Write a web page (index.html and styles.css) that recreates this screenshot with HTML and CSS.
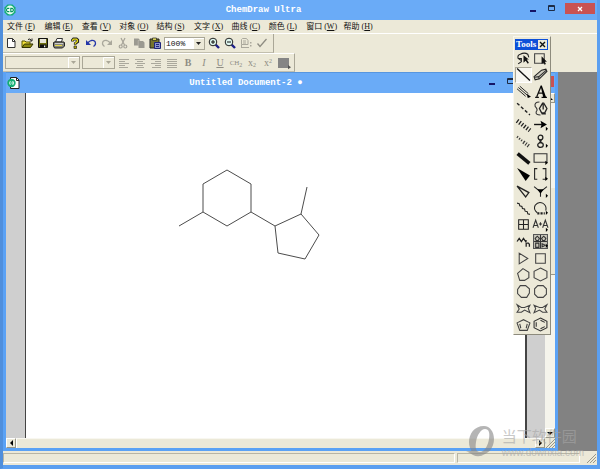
FILE: index.html
```html
<!DOCTYPE html>
<html lang="zh-CN">
<head>
<meta charset="utf-8">
<title>ChemDraw Ultra</title>
<link rel="stylesheet" href="styles.css">
</head>
<body>
<div class="app">
  <header class="titlebar">
    <svg class="app-icon" width="12" height="12" viewBox="0 0 12 12"><path d="M3.5.5h5l3 3v5l-3 3h-5l-3-3v-5z" fill="#12ad72"/><circle cx="6" cy="6" r="4.4" fill="#e9fff5"/><path d="M5.3 4.4H3.5L2.6 5.2v1.6l.9.8h1.8M6.8 4.4h1.5l1 .9v1.5l-1 .8H6.8z" fill="none" stroke="#079560" stroke-width="1.1"/></svg>
    <h1>ChemDraw Ultra</h1>
    <div class="winbtns">
      <button aria-label="最小化"><svg width="8" height="10"><path d="M1 7h6" stroke="#151567" stroke-width="2"/></svg></button>
      <button aria-label="最大化"><svg width="8" height="10"><path d="M1.500 1.500h6v5h-6zM1.500 2.500h6" fill="none" stroke="#1d2b45"/></svg></button>
      <button class="close" aria-label="关闭"><svg width="8" height="8"><path d="M2 2l4 4M6 2L2 6" stroke="#fff" stroke-width="1.300"/></svg></button>
    </div>
  </header>
  <nav class="menu">
    <a href="#">文件 <span>(<u>F</u>)</span></a><a href="#">编辑 <span>(<u>E</u>)</span></a><a href="#">查看 <span>(<u>V</u>)</span></a><a href="#">对象 <span>(<u>O</u>)</span></a><a href="#">结构 <span>(<u>S</u>)</span></a><a href="#">文字 <span>(<u>X</u>)</span></a><a href="#">曲线 <span>(<u>C</u>)</span></a><a href="#">颜色 <span>(<u>L</u>)</span></a><a href="#">窗口 <span>(<u>W</u>)</span></a><a href="#">帮助 <span>(<u>H</u>)</span></a>
  </nav>
  <div class="bars">
    <div class="bar">
      <button aria-label="新建"><svg viewBox="0 0 12 12"><path d="M2.500 1.500h5l2.500 2.500v6.500H2.500z" fill="#fff" stroke="#333"/><path d="M7.500 1.500v3H10" fill="none" stroke="#333"/></svg></button>
      <button aria-label="打开"><svg viewBox="0 0 12 12"><path d="M1 10V4h3l1 1h4v2" fill="#f3e23c" stroke="#565400"/><path d="M1 10.500L3.500 7H12l-2.500 3.500z" fill="#8c8a10" stroke="#333300"/><path d="M7 2.500q2-1.500 3.500 1M11 1.500v2.500H8.800" fill="none" stroke="#222"/></svg></button>
      <button aria-label="保存"><svg viewBox="0 0 12 12"><path d="M1.500 1.500h9v9h-9z" fill="#6e6e10" stroke="#111"/><path d="M3 2h6v4H3z" fill="#e7e5d8"/><path d="M3 7.500h6.500V11H3z" fill="#111"/><path d="M7 8.500h1.300v1.700H7z" fill="#eee"/></svg></button>
      <button aria-label="打印"><svg viewBox="0 0 12 12"><path d="M4 1.500h5.500L8.500 5h-6z" fill="#fff" stroke="#333"/><path d="M1 5h10l.5 1v3l-2 2H1.500L.500 9V6z" fill="#86867b" stroke="#222"/><path d="M2 8.500h7" stroke="#e7da4a"/><path d="M2 6.500h8" stroke="#ccc"/></svg></button>
      <button aria-label="帮助"><svg viewBox="0 0 12 12"><path d="M3.500 4.500V3l1-1h3l1.200 1v1.700L6.300 6.500v1.300" fill="none" stroke="#222" stroke-width="2.800"/><path d="M3.600 4V3l1-.8h2.800l1 .8v1.500L6.300 6.300v1" fill="none" stroke="#e6dc13" stroke-width="1.300"/><path d="M5 9h2.500v2.500H5z" fill="#b7ac00" stroke="#222" stroke-width=".7"/></svg></button>
      <button aria-label="撤消"><svg viewBox="0 0 12 12"><path d="M2.500 6Q7 1.500 10 4.500q1.500 3-1.500 5" fill="none" stroke="#2436a8" stroke-width="1.300"/><path d="M1 3v5h5z" fill="#2436a8"/></svg></button>
      <button aria-label="重做"><svg viewBox="0 0 12 12"><path d="M9.500 6Q5 1.500 2 4.500q-1.500 3 1.500 5" fill="none" stroke="#aaa89c" stroke-width="1.300"/><path d="M11 3v5H6z" fill="#aaa89c"/></svg></button>
      <button aria-label="剪切"><svg viewBox="0 0 12 12"><path d="M4 1l3.500 7M8 1L4.500 8" stroke="#a5a398" stroke-width="1.200"/><g fill="none" stroke="#a5a398" stroke-width="1.200"><circle cx="3.700" cy="9.500" r="1.500"/><circle cx="8.300" cy="9.500" r="1.500"/></g></svg></button>
      <button aria-label="复制"><svg viewBox="0 0 12 12"><path d="M1 1.500h4.500L7 3v5.500H1zM5.500 4H10l1.500 1.500V11h-6z" fill="#9b9a91"/><path d="M5.200 8.500v-5h2" fill="none" stroke="#c8c5b8" stroke-width=".6"/></svg></button>
      <button aria-label="粘贴"><svg viewBox="0 0 12 12"><path d="M1 2h9v9H1z" fill="#77742c" stroke="#222"/><path d="M3.500 1h4v2.500h-4z" fill="#d9d35b" stroke="#222" stroke-width=".7"/><path d="M5.500 5.500h6v6h-6z" fill="#8d93cc" stroke="#20267c"/><path d="M7 7.500h3M7 9.500h3" stroke="#20267c"/></svg></button>
      <select class="zoom" aria-label="缩放"><option>100%</option></select>
      <button aria-label="放大"><svg viewBox="0 0 12 12"><path d="M7.500 7.500L11 11" stroke="#1d2089" stroke-width="2.400"/><circle cx="5" cy="5" r="3.800" fill="#dff7f0" stroke="#222"/><path d="M3 5h4M5 3v4" stroke="#111"/></svg></button>
      <button aria-label="缩小"><svg viewBox="0 0 12 12"><path d="M7.500 7.500L11 11" stroke="#1d2089" stroke-width="2.400"/><circle cx="5" cy="5" r="3.800" fill="#dff7f0" stroke="#222"/><path d="M3 5h4" stroke="#111"/></svg></button>
      <button aria-label="检查结构"><svg viewBox="0 0 12 12"><g fill="none" stroke="#aaa89c"><path d="M2.500 1.500h4l1.500 2v4H1.500v-5zM3 4h3M3 6h3M1 10.500h8M1.500 7.500v3"/></g><path d="M10 5h1.500v1.500H10zM10 8h1.500v1.500H10z" fill="#aaa89c"/></svg></button>
      <button aria-label="确认"><svg viewBox="0 0 12 12"><path d="M1.500 6.500l2.500 3L10.500 2" fill="none" stroke="#8e8c82" stroke-width="1.300"/></svg></button>
    </div>
    <div class="bar format">
      <select class="font" aria-label="字体" disabled><option></option></select>
      <select class="size" aria-label="字号" disabled><option></option></select>
      <button aria-label="左对齐"><svg viewBox="0 0 12 12"><path d="M1 2.500h10M1 4.500h6M1 6.500h10M1 8.500h6M1 10.500h9" stroke="#aaa89c"/></svg></button>
      <button aria-label="居中"><svg viewBox="0 0 12 12"><path d="M1 2.500h10M3 4.500h6M1 6.500h10M3 8.500h6M2 10.500h8" stroke="#aaa89c"/></svg></button>
      <button aria-label="右对齐"><svg viewBox="0 0 12 12"><path d="M1 2.500h10M5 4.500h6M1 6.500h10M5 8.500h6M2 10.500h9" stroke="#aaa89c"/></svg></button>
      <button aria-label="两端对齐"><svg viewBox="0 0 12 12"><path d="M1 2.500h10M1 4.500h10M1 6.500h10M1 8.500h10M1 10.500h10" stroke="#aaa89c"/></svg></button>
      <button><b>B</b></button><button><i>I</i></button><button><u>U</u></button>
      <button class="chem">CH<sub>2</sub></button><button>x<sub>2</sub></button><button>x<sup>2</sup></button>
      <button aria-label="颜色"><svg viewBox="0 0 12 12"><path d="M0 1h11v10H0z" fill="#858585"/><path d="M10 8l3 2.200-3 2z" fill="#555"/></svg></button>
    </div>
  </div>

  <main class="mdi">
    <section class="doc">
      <header class="titlebar doc-title">
        <svg class="app-icon" width="13" height="12" viewBox="0 0 13 12"><path d="M3.500.500h6l2.500 2.500v8.500H3.500z" fill="#fff" stroke="#222"/><path d="M9.500.500v3H12" fill="none" stroke="#222"/><circle cx="4.500" cy="6" r="4.200" fill="#12ad72"/><path d="M4 4.800H2.700v2.400H4M5 4.800h1.500v2.400H5z" fill="none" stroke="#e9fff5" stroke-width=".8"/></svg>
        <h2>Untitled Document-2 ●</h2>
        <div class="winbtns">
          <button aria-label="最小化"><svg width="8" height="10"><path d="M1 7h6" stroke="#151567" stroke-width="2"/></svg></button>
          <button aria-label="最大化"><svg width="8" height="10"><path d="M1.500 1.500h6v5h-6zM1.500 2.500h6" fill="none" stroke="#1d2b45"/></svg></button>
          <button class="close" aria-label="关闭"><svg width="8" height="8"><path d="M2 2l4 4M6 2L2 6" stroke="#fff" stroke-width="1.300"/></svg></button>
        </div>
      </header>
      <div class="view">
        <div class="desk">
          <div class="paper">
            <svg class="molecule" width="150" height="100" viewBox="175 165 150 100" fill="none" stroke="#4c4c4c" stroke-width="1"><path d="M227 170l24 14v28l-24 14-24-14v-28zM203 212l-24 14M251 212l24 14 26-12 18 21-14 24-27-6-3-27M301 214l6-27"/></svg>
          </div>
        </div>
        <div class="scroll-v"><button aria-label="向上"><svg width="7" height="5"><path d="M0 4l3-3 3 3z"/></svg></button><i class="track"></i><i class="thumb"></i><i class="track low"></i><button aria-label="向下"><svg width="7" height="5"><path d="M0 1h6L3 4z"/></svg></button></div>
        <div class="scroll-h"><button aria-label="向左"><svg width="5" height="7"><path d="M4 0v6L1 3z"/></svg></button><i></i><button aria-label="向右"><svg width="5" height="7"><path d="M1 0v6l3-3z"/></svg></button></div>
        <svg class="grip" viewBox="0 0 10 10"><path d="M0 0h10v10H0z" fill="#ece9d8"/><path d="M1 10l9-9M4 10l6-6M7 10l3-3" stroke="#9a9889"/></svg>
      </div>
    </section>
  </main>
  <footer class="status"><span></span><span></span><svg class="grip" viewBox="0 0 10 10"><path d="M1 10l9-9M4 10l6-6M7 10l3-3" stroke="#9a9889"/></svg></footer>

  <aside class="tools">
    <header><h3>Tools</h3><button aria-label="关闭工具"><svg width="7" height="7"><path d="M1 1l5 5M6 1L1 6" stroke="#111" stroke-width="1.400"/></svg></button></header>
    <div class="grid">
      <button aria-label="套索"><svg viewBox="0 0 14 14"><path d="M5 9L2 7q-1-3 2-4 4-2 7 0l1 3M2 7l3 0 0 3-3 2" fill="none" stroke="#222"/><path d="M7 4v7l2-2 2 3 1-1-2-3h2z" fill="#111"/></svg></button>
      <button aria-label="选框"><svg viewBox="0 0 14 14"><path d="M1.500 2.500h9v9h-9z" fill="none" stroke="#444"/><path d="M8 5v7l2-1 1 2 1-1-1-2h2z" fill="#111"/></svg></button>
      <button class="on" aria-label="单键"><svg viewBox="0 0 14 14"><path d="M1 1.500l12 11" stroke="#111" stroke-width="1.300"/></svg></button>
      <button aria-label="橡皮"><svg viewBox="0 0 14 14"><path d="M1 9l7-6 4-1 1 2-7 7-4 1z" fill="#d0cec2" stroke="#222"/><path d="M1.500 9.500l4-.5 7-6M5.500 9v2.500" fill="none" stroke="#333"/></svg></button>
      <button aria-label="多重键"><svg viewBox="0 0 14 14"><path d="M1 4.500l8 7M3.500 2l8 7M2.200 3.200l8 7" stroke="#222" stroke-width=".9"/><path d="M10 9l4 3-3 1z"/></svg></button>
      <button aria-label="文本"><svg viewBox="0 0 14 14"><path d="M2 12.500h3.500M8 12.500h5M3.500 12L7.500 2M4.800 8.500h5" fill="none" stroke="#111" stroke-width="1.200"/><path d="M7 1.500h1.200L12.500 13H9.700z"/></svg></button>
      <button aria-label="虚线键"><svg viewBox="0 0 14 14"><path d="M1 2l12 11" stroke="#222" stroke-width="1.300" stroke-dasharray="3 2"/></svg></button>
      <button aria-label="钢笔"><svg viewBox="0 0 14 14"><path d="M6 1Q1 1 2 5q3 3 1 5-1 3 4 3" fill="none" stroke="#333"/><path d="M9 2L6 7l2 4h3l2-4-3-5zM9.500 3v5M8 12h4" fill="none" stroke="#222" stroke-width="1.200"/></svg></button>
      <button aria-label="切割键"><svg viewBox="0 0 14 14"><path d="M1 3.500l12 9" stroke="#222" stroke-width="4" stroke-dasharray="1.200 1.600"/></svg></button>
      <button aria-label="箭头"><svg viewBox="0 0 14 14"><path d="M1 7h8" stroke="#111" stroke-width="1.300"/><path d="M7 3.500L13 7l-6 3.500L8 7zM12 9l2 2-2 2z"/></svg></button>
      <button aria-label="切割楔键"><svg viewBox="0 0 14 14"><path d="M1 2.500l6 5" stroke="#333" stroke-width="2" stroke-dasharray="1 1.500"/><path d="M7 7.500l6 4.500" stroke="#333" stroke-width="3.500" stroke-dasharray="1 1.500"/></svg></button>
      <button aria-label="轨道"><svg viewBox="0 0 14 14"><g fill="none" stroke="#222" stroke-width="1.200"><circle cx="7" cy="3.300" r="2.200"/><ellipse cx="7" cy="10.300" rx="2.600" ry="2.200"/><path d="M6 5l2 3.500M8 5L6 8.500"/></g><path d="M12 9l2 2-2 2z"/></svg></button>
      <button aria-label="粗键"><svg viewBox="0 0 14 14"><path d="M1.500 2.500l11 9" stroke="#111" stroke-width="3.400"/></svg></button>
      <button aria-label="绘图元素"><svg viewBox="0 0 14 14"><path d="M1 2.500h12v8H1z" fill="none" stroke="#333"/><path d="M11.500 9l2.500 2-2.500 2z"/></svg></button>
      <button aria-label="楔键"><svg viewBox="0 0 14 14"><path d="M1 1l12 7-4 5z"/></svg></button>
      <button aria-label="括号"><svg viewBox="0 0 14 14"><path d="M4 1.500H1.500v10H4M9 1.500h3v10H9" fill="none" stroke="#222"/><path d="M11.500 9l2.500 2-2.500 2z"/></svg></button>
      <button aria-label="空心楔键"><svg viewBox="0 0 14 14"><path d="M1 2l11 6-3 4z" fill="none" stroke="#222" stroke-width="1.200"/></svg></button>
      <button aria-label="符号"><svg viewBox="0 0 14 14"><path d="M1 2.500l5 4h2l5-4M7 6v6" fill="none" stroke="#222"/><path d="M4 5h6L7 9zM12 9l2 2-2 2z"/></svg></button>
      <button aria-label="波浪键"><svg viewBox="0 0 14 14"><path d="M1 2l2 .5.500 2 2 .5.500 2 2 .5.500 2 2 .5.500 2 2 .5" fill="none" stroke="#222"/></svg></button>
      <button aria-label="弧"><svg viewBox="0 0 14 14"><path d="M4 11Q0 8 2 4q3-4 7-2 4 2 3 7" fill="none" stroke="#222"/><path d="M4 11.500h7" stroke="#222" stroke-width="2" stroke-dasharray="2 1"/><path d="M12 9l2 2-2 2z"/></svg></button>
      <button aria-label="表格"><svg viewBox="0 0 14 14"><path d="M2.500 2.500h9v9h-9zM7 2v10M2 7h10" fill="none" stroke="#222"/></svg></button>
      <button aria-label="查询"><svg viewBox="0 0 14 14"><path d="M0 10L2.500 3 5 10M1 8h3M5.500 6.500h3M7 5v3M9 10l2.500-7L14 10M10 8h3" fill="none" stroke="#333"/><path d="M12 10l2 2-2 2z"/></svg></button>
      <button aria-label="链"><svg viewBox="0 0 14 14"><path d="M1 7l2-3 2 3 2-3 2 3 1-1M9.500 12V8.500h2l1 1V12" fill="none" stroke="#222" stroke-width="1.200"/></svg></button>
      <button aria-label="模板"><svg viewBox="0 0 14 14"><path d="M.5.500h13v13H.500z" fill="#c9c7bb" stroke="#555"/><path d="M2 4l2-2 2 2-1 2H3zM8 4l2-2 2 2-1 2H9zM7 1v12M1 7h12M2.500 8.500h3v4h-3zM8.500 9l3 1.500-3 1.500z" fill="none" stroke="#333"/><path d="M12 9l2 2-2 2z"/></svg></button>
      <button aria-label="三元环"><svg viewBox="0 0 14 14"><path d="M3 2l8 5-8 5z" fill="none" stroke="#444"/></svg></button>
      <button aria-label="四元环"><svg viewBox="0 0 14 14"><path d="M2.500 2.500h9v9h-9z" fill="none" stroke="#444"/></svg></button>
      <button aria-label="五元环"><svg viewBox="0 0 14 14"><path d="M1.500 6l5-4.500L12 5v5l-4 2.500H3.500z" fill="none" stroke="#444"/></svg></button>
      <button aria-label="六元环"><svg viewBox="0 0 14 14"><path d="M7 1l6 3v6l-6 3-6-3V4z" fill="none" stroke="#444"/></svg></button>
      <button aria-label="七元环"><svg viewBox="0 0 14 14"><path d="M4 1.500h5l3.500 3v4L10 12.500H5L1.500 9V5z" fill="none" stroke="#444"/></svg></button>
      <button aria-label="八元环"><svg viewBox="0 0 14 14"><path d="M4.500 1.500h5l3 3v5l-3 3h-5l-3-3v-5z" fill="none" stroke="#444"/></svg></button>
      <button aria-label="椅式环一"><svg viewBox="0 0 14 14"><path d="M1 3.500l4 2.500h3l5-2-1.500 3 1.500 4-5-2.500-3 2-4 0 2-3z" fill="none" stroke="#444"/></svg></button>
      <button aria-label="椅式环二"><svg viewBox="0 0 14 14"><path d="M13 3.500l-4 2.500H6l-5-2 1.500 3L1 11l5-2.500 3 2h4l-2-3z" fill="none" stroke="#444"/></svg></button>
      <button aria-label="环戊二烯"><svg viewBox="0 0 14 14"><path d="M1 5.500l6-3 6 3-2.500 7h-7zM3.500 6.500l1 4M10.500 6.500l-1 4" fill="none" stroke="#444"/></svg></button>
      <button aria-label="苯环"><svg viewBox="0 0 14 14"><path d="M7 1l6 3v6l-6 3-6-3V4zM3 5v4M7 3l4 2M11 9l-4 2" fill="none" stroke="#333"/></svg></button>
    </div>
  </aside>

  <div class="watermark">
    <svg width="32" height="32" viewBox="0 0 32 32"><path fill-rule="evenodd" d="M18 1C8 1 3 9 3 17c0 8 5 13 11 13 8 0 14-7 14-16C28 7 24 1 18 1zm1 3c4 0 5 4 4 10-1 7-5 13-9 13-4 0-5-4-4-10C11 10 15 4 19 4z"/><path d="M0 26q4 1 6-1 5 6 13 4-6 4-12 1-3-2-7-4z"/></svg>
    <p><strong>当下软件园</strong><span>www.downxia.com</span></p>
  </div>
</div>
</body>
</html>
```
FILE: styles.css
```css
* { box-sizing: border-box; }
html, body { height: 100%; margin: 0; }
body { overflow: hidden; font-family: "Liberation Serif", "Noto Sans CJK SC", serif; font-size: 8px; color: #222; }
button { appearance: none; border: 0; padding: 0; margin: 0; background: none; color: inherit; font: inherit; display: flex; align-items: center; justify-content: center; flex: none; }
svg { display: block; flex: none; overflow: visible; }
h1, h2, h3, p { margin: 0; }

.app { position: relative; height: 100vh; display: flex; flex-direction: column; background: #ece9d8; border: 3px solid #5b9ff0; border-top: 0; border-left-color: #508fdc; }
.titlebar { flex: none; display: flex; align-items: center; height: 20px; background: #6aabf7; }
.titlebar h1, .titlebar h2 { flex: 1; text-align: center; font: bold 9px/12px "Liberation Mono", monospace; color: #fff; white-space: nowrap; }
.app-icon { margin-left: 1px; }
.winbtns { display: flex; align-items: center; align-self: flex-start; gap: 10px; padding: 3px 2px 0 18px; }
.winbtns button { height: 10px; }
.winbtns .close { width: 30px; height: 11px; background: #c95253; }

.menu { flex: none; display: grid; grid-template-columns: repeat(10, 1fr); width: 378px; height: 13px; padding-left: 4px; line-height: 13px; }
.menu a { color: #111; text-decoration: none; white-space: nowrap; }

.bars { flex: none; height: 39px; border-top: 1px solid #fff; display: flex; flex-direction: column; align-items: flex-start; }
.bar { display: flex; align-items: center; height: 19px; padding-right: 3px; border-right: 1px solid #aaa797; border-bottom: 1px solid #c2bfae; }
.bar button { width: 16px; height: 16px; }
.bar button svg { width: 12px; height: 12px; }
.format { padding: 0 2px; border-top: 1px solid #fff; color: #8f8d84; font-size: 10px; }
.format .chem { font-size: 7px; }
.format sub, .format sup { font-size: 6px; line-height: 6px; }
.format sub { align-self: flex-end; padding-bottom: 3px; }
.format sup { align-self: flex-start; padding-top: 3px; }
select { appearance: none; margin: 0 1px 0 0; padding: 0 0 0 1px; height: 13px; border: 1px solid #aaa797; border-radius: 0; font: 8px/11px "Liberation Mono", monospace; color: #111; opacity: 1; background: url("data:image/svg+xml,%3Csvg xmlns='http://www.w3.org/2000/svg' width='11' height='11'%3E%3Cpath d='M0 0h11v11H0z' fill='%23ece9d8'/%3E%3Cpath d='M.5 11V.5H11' fill='none' stroke='%23fff'/%3E%3Cpath d='M3 4h5L5.500 7z' fill='%23222'/%3E%3C/svg%3E") right center no-repeat #fff; }
select:disabled { background: url("data:image/svg+xml,%3Csvg xmlns='http://www.w3.org/2000/svg' width='11' height='11'%3E%3Cpath d='M.5 11V.5H11' fill='none' stroke='%23fff'/%3E%3Cpath d='M3 4h5L5.500 7z' fill='%23aaa797'/%3E%3C/svg%3E") right center no-repeat #ece9d8; }
.zoom { width: 41px; margin-left: 1px; }
.font { width: 75px; margin-right: 2px; }
.size { width: 33px; }

.mdi { flex: 1; min-height: 0; display: flex; background: #828282; padding-right: 39px; }
.doc { flex: 1; display: flex; flex-direction: column; border: 3px solid #5ba2f5; border-top: 0; }
.doc-title { height: 21px; border-top: 1px solid #5796df; }
.doc-title .winbtns { padding-right: 1px; }
.doc-title h2 { padding-left: 2px; }
.view { flex: 1; min-height: 0; display: grid; grid-template-columns: 1fr 10px; grid-template-rows: 1fr 10px; }
.desk { display: flex; background: #cfcfcf; padding: 0 18px 0 19px; }
.paper { flex: 1; background: #fff; border-left: 1px solid #444; border-right: 2px solid #444; }
.molecule { margin: 72px 0 0 149px; }
.scroll-v { display: flex; flex-direction: column; background: #f5f4ec; }
.scroll-v button, .scroll-h button { width: 10px; height: 10px; background: #ece9d8; border: 1px solid #fff; border-right-color: #999788; border-bottom-color: #999788; }
.scroll-v .track, .scroll-v .thumb { flex: 10; }
.scroll-v .thumb { background: #ece9d8; border-bottom: 1px solid #999788; }
.scroll-v .low { flex: 18; }
.scroll-h { display: flex; background: #ece9d8; }
.scroll-h i { flex: 1; border-left: 1px solid #fff; border-top: 1px solid #f8f7f0; }
.grip { width: 10px; height: 10px; }

.status { flex: none; display: flex; align-items: flex-end; box-sizing: content-box; height: 10px; padding: 2px 1px 2px 0; border-bottom: 3px solid #5b9ff0; background: #ece9d8; }
.app { border-bottom-width: 1px; }
.status span { align-self: stretch; border: 1px solid #fff; border-top-color: #b8b5a4; border-left-color: #b8b5a4; }
.status span:first-child { flex: 456; }
.status span:nth-child(2) { flex: 123; margin: 0 6px 0 2px; }

.tools { position: absolute; top: 36px; right: 46px; width: 38px; padding: 2px 2px 1px 1px; background: #ece9d8; border: 1px solid #f8f7ee; border-right-color: #8d8b7d; border-bottom-color: #8d8b7d; }
.tools header { display: flex; align-items: center; justify-content: space-between; height: 11px; padding-right: 1px; background: #0d50d8; }
.tools h3 { padding-left: 1px; color: #fff; font: bold 9px/11px "Liberation Serif", serif; }
.tools header button { width: 9px; height: 9px; background: #ece9d8; }
.grid { display: grid; grid-template-columns: 1fr 1fr; grid-template-rows: repeat(17, 1fr); height: 283px; }
.grid button { min-height: 0; }
.grid svg { width: 15px; height: 15px; }
.grid .on { background: #f8f7f1; border: 1px solid #aaa797; border-right-color: #fff; border-bottom-color: #fff; }

.watermark { position: absolute; right: 13px; bottom: 10px; display: flex; align-items: center; gap: 4px; opacity: .6; pointer-events: none; color: #a6a6a6; fill: #858585; }
.watermark p { display: flex; flex-direction: column; }
.watermark strong { font: 15px/23px "Noto Sans CJK SC", sans-serif; }
.watermark span { font: 10px/11px "Liberation Sans", sans-serif; }
```
